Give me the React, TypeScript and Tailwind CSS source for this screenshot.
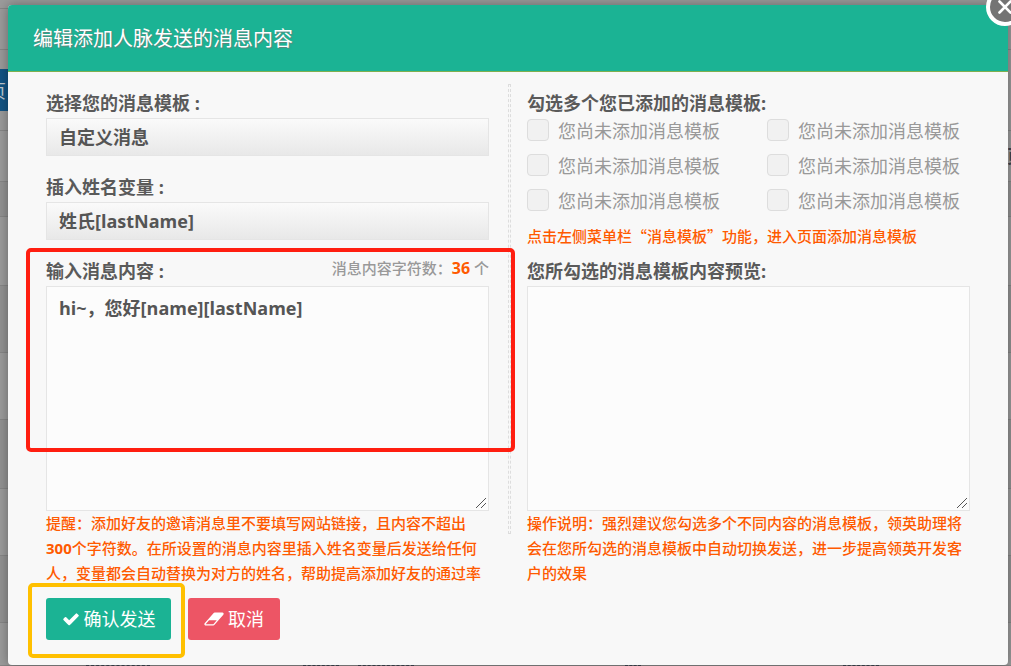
import { useState } from "react";

const backdropRows = [
  "h-[9px] bg-[#9b9b9b]",
  "h-[41px] bg-[#9b9b9b]",
  "h-[81px] bg-[#9a9a9a]",
  "h-[51px] bg-[#9b9b9b]",
  "h-[35px] bg-[#929292]",
  "h-[69px] bg-[#9b9b9b]",
  "h-[67px] bg-[#929292]",
  "h-[67px] bg-[#9b9b9b]",
  "h-[69px] bg-[#929292]",
  "h-[67px] bg-[#9b9b9b]",
  "h-[67px] bg-[#929292]",
  "flex-1 bg-[#9b9b9b]",
];

const backdropMarks = [
  "left-[86px] w-16",
  "left-[303px] w-9",
  "left-[358px] w-14",
  "left-[625px] w-4",
  "left-[843px] w-9",
];

const labelClass = "block h-[30px] text-[18px] leading-[30px] font-bold text-[#5a5a5a]";
const selectClass =
  "block h-[38px] w-full appearance-none rounded-none border border-[#e5e5e5] bg-linear-to-b from-[#fafafa] to-[#e8e8e8] px-3 text-[18px] font-bold text-[#555] outline-none";
const areaClass =
  "block h-[225px] w-full resize-y rounded-none border border-[#e5e5e5] bg-[#fcfcfc] px-3 py-[7px] text-[18px] leading-7 font-bold text-[#555] outline-none [&::-webkit-resizer]:hidden";
const hintClass = "text-[15px] leading-[25px] font-medium text-[#ff5a00]";

function Backdrop() {
  return (
    <div aria-hidden="true" className="absolute inset-0 flex flex-col">
      {backdropRows.map((row, i) => (
        <div key={i} className={`border-b border-[#868686] ${row}`} />
      ))}
      <div className="absolute top-[69px] left-0 h-[42px] w-8 overflow-hidden bg-[#135484]">
        <span className="absolute top-2 -left-3 text-[18px] leading-7 text-[#c0c8ce]">页</span>
      </div>
      <span className="absolute top-[142px] -right-[14px] text-[18px] leading-7 font-bold text-[#3d4450]">页</span>
      {backdropMarks.map((mark) => (
        <div key={mark} className={`absolute bottom-0 border-b border-dashed border-[#3d4450] ${mark}`} />
      ))}
    </div>
  );
}

function Grip() {
  return (
    <svg
      aria-hidden="true"
      viewBox="0 0 12 12"
      className="pointer-events-none absolute right-[2px] bottom-[2px] size-3"
      stroke="#555"
      strokeWidth="1"
    >
      <path d="M1 11L11 1M6 11L11 6" />
    </svg>
  );
}

function CheckIcon() {
  return (
    <svg aria-hidden="true" viewBox="0 0 1792 1792" className="size-[18px]" fill="currentColor">
      <path d="M1671 566q0 40-28 68l-724 724-136 136q-28 28-68 28t-68-28l-136-136-362-362q-28-28-28-68t28-68l136-136q28-28 68-28t68 28l294 295 656-657q28-28 68-28t68 28l136 136q28 28 28 68z" />
    </svg>
  );
}

function EraserIcon() {
  return (
    <svg aria-hidden="true" viewBox="0 0 1920 1792" className="h-[18px] w-5" fill="currentColor">
      <path d="M896 1408l336-384h-768l-336 384h768zm1013-1077q15 34 9.5 71.5t-30.5 65.5l-896 1024q-38 44-96 44h-768q-38 0-69.5-20.5t-47.5-54.5q-15-34-9.5-71.5t30.5-65.5l896-1024q38-44 96-44h768q38 0 69.5 20.5t47.5 54.5z" />
    </svg>
  );
}

export default function App() {
  const [message, setMessage] = useState("hi~，您好[name][lastName]");

  return (
    <div className="relative min-h-screen overflow-hidden font-['Open_Sans','Noto_Sans_CJK_SC',sans-serif]">
      <Backdrop />
      <div
        role="dialog"
        aria-labelledby="dialog-title"
        className="relative mt-[5px] mr-[3px] ml-2 rounded-[4px] bg-[#f8f8f8] shadow-[0_0_12px_rgba(0,0,0,0.35)]"
      >
        <button
          type="button"
          aria-label="关闭"
          className="absolute -top-[17px] -right-4 z-10 flex size-[38px] items-center justify-center rounded-full border-4 border-white bg-[#747474]"
        >
          <svg viewBox="0 0 16 16" className="size-4" fill="none" stroke="white" strokeWidth="2.6" strokeLinecap="round">
            <path d="M2.5 2.5l11 11M13.5 2.5l-11 11" />
          </svg>
        </button>

        <header className="rounded-t-[4px] border-b border-[#7fb04f] bg-[#1bb394] px-[25px] pt-5 pb-[18px]">
          <h1 id="dialog-title" className="text-[20px] leading-7 text-white [text-shadow:1px_1px_1px_#777777cc]">
            编辑添加人脉发送的消息内容
          </h1>
        </header>

        <form className="pt-3 pr-[38px] pb-[25px] pl-[38px]" onSubmit={(e) => e.preventDefault()}>
          <div className="flex items-start">
            <section className="min-w-0 flex-1 pt-1">
              <label htmlFor="template" className={labelClass}>
                选择您的消息模板 :
              </label>
              <select id="template" className={selectClass}>
                <option>自定义消息</option>
              </select>

              <label htmlFor="variable" className={`mt-4 ${labelClass}`}>
                插入姓名变量 :
              </label>
              <select id="variable" className={selectClass}>
                <option>姓氏[lastName]</option>
              </select>

              <div className="relative mt-4">
                <div className="flex justify-between">
                  <label htmlFor="message" className={labelClass}>
                    输入消息内容 :
                  </label>
                  <p className="text-[15px] leading-[25px] font-medium text-[#999]">
                    消息内容字符数：<strong className="text-[16px] font-bold text-[#ff5a00]">36</strong> 个
                  </p>
                </div>
                <textarea
                  id="message"
                  className={areaClass}
                  value={message}
                  onChange={(e) => setMessage(e.target.value)}
                />
                <Grip />
                <div className="pointer-events-none absolute -top-2 -right-[26px] -left-5 h-[204px] rounded-[5px] border-4 border-[#ff1e10]" />
              </div>
              <p className={hintClass}>
                提醒：添加好友的邀请消息里不要填写网站链接，且内容不超出<span className="font-bold">300</span>
                个字符数。在所设置的消息内容里插入姓名变量后发送给任何人，变量都会自动替换为对方的姓名，帮助提高添加好友的通过率
              </p>
            </section>

            <div className="mr-4 ml-[19px] h-[450px] w-[3px] border border-dashed border-[#ddd]" />

            <section className="min-w-0 flex-1 pt-1">
              <h2 className={labelClass}>勾选多个您已添加的消息模板:</h2>
              <div className="grid grid-cols-[240px_1fr]">
                {[1, 2, 3, 4, 5, 6].map((n) => (
                  <label key={n} className="flex h-[35px] items-start gap-[9px] text-[18px] leading-[27px] text-[#999]">
                    <input
                      type="checkbox"
                      className="mt-px size-[22px] shrink-0 appearance-none rounded-[4px] border border-[#ddd] bg-[#f1f1f1]"
                    />
                    您尚未添加消息模板
                  </label>
                ))}
              </div>
              <p lang="zh-CN" className={`font-['Noto_Sans_CJK_SC',sans-serif] ${hintClass}`}>
                点击左侧菜单栏“消息模板”功能，进入页面添加消息模板
              </p>
              <label htmlFor="preview" className={`mt-2 ${labelClass}`}>
                您所勾选的消息模板内容预览:
              </label>
              <div className="relative">
                <textarea id="preview" readOnly className={areaClass} />
                <Grip />
              </div>
              <p className={hintClass}>
                操作说明：强烈建议您勾选多个不同内容的消息模板，领英助理将会在您所勾选的消息模板中自动切换发送，进一步提高领英开发客户的效果
              </p>
            </section>
          </div>

          <div className="mt-3 flex gap-[17px]">
            <div className="relative">
              <button
                type="submit"
                className="flex h-[42px] w-[125px] items-center justify-center gap-1 rounded-[3px] bg-[#1bb394] text-[18px] text-white"
              >
                <CheckIcon />
                确认发送
              </button>
              <div className="pointer-events-none absolute -top-[15px] -right-[14px] -bottom-[18px] -left-[18px] rounded-[5px] border-4 border-[#ffc000]" />
            </div>
            <button
              type="button"
              className="flex h-[42px] w-[92px] items-center justify-center gap-1 rounded-[3px] bg-[#ed5565] text-[18px] text-white"
            >
              <EraserIcon />
              取消
            </button>
          </div>
        </form>
      </div>
    </div>
  );
}
